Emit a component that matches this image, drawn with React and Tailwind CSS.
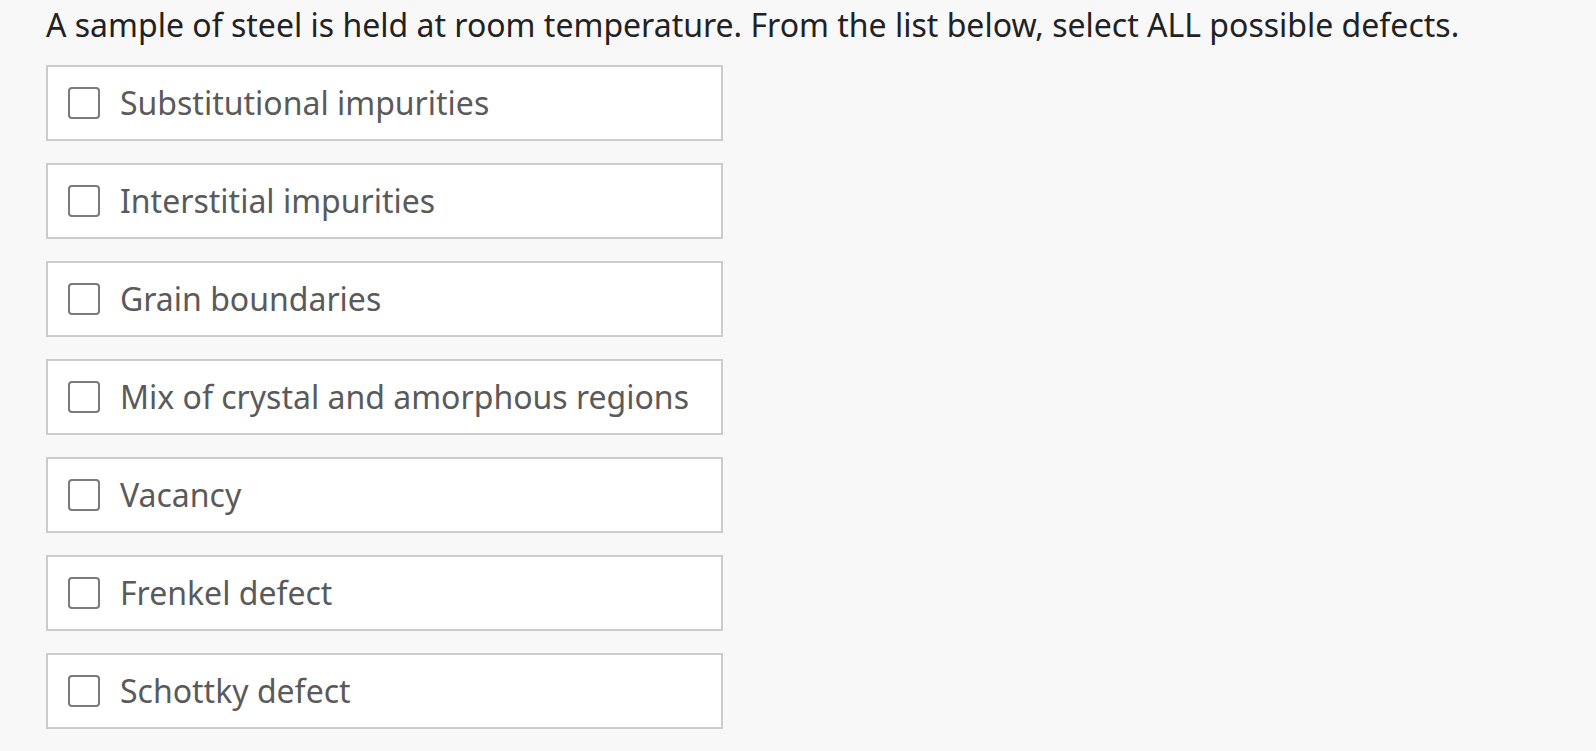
import React from "react";

const options = [
  "Substitutional impurities",
  "Interstitial impurities",
  "Grain boundaries",
  "Mix of crystal and amorphous regions",
  "Vacancy",
  "Frenkel defect",
  "Schottky defect",
];

const Option = ({ label }) => (
  <label className="flex h-[76px] w-[677px] items-center gap-[20px] border-2 border-[#cccccc] bg-white pl-[20px]">
    <span className="block h-[32px] w-[32px] shrink-0 rounded-[4px] border-2 border-[#7a7a7a] bg-white" />
    <span className="text-[32px] leading-[44px] text-[#5a5a5a]">{label}</span>
  </label>
);

export default function App() {
  return (
    <div
      className="min-h-screen bg-[#f8f8f8] pl-[46px] pt-[3px]"
      style={{ fontFamily: '"Noto Sans", "Open Sans", sans-serif' }}
    >
      <p className="text-[32px] leading-[44px] text-[#222222]">
        A sample of steel is held at room temperature. From the list below, select ALL possible defects.
      </p>
      <div className="mt-[18px] flex flex-col gap-[22px]">
        {options.map((o) => (
          <Option key={o} label={o} />
        ))}
      </div>
    </div>
  );
}
